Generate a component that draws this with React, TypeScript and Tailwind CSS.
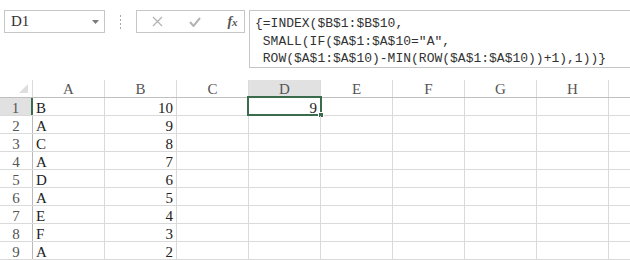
import React from "react";

const cols = ["A", "B", "C", "D", "E", "F", "G", "H"];

const rows: [string, number][] = [
  ["B", 10],
  ["A", 9],
  ["C", 8],
  ["A", 7],
  ["D", 6],
  ["A", 5],
  ["E", 4],
  ["F", 3],
  ["A", 2],
];

const mono = "font-[family-name:'Liberation_Mono','Noto_Sans_CJK_SC',monospace]";
const serif = "font-[family-name:'Liberation_Serif','Noto_Sans_CJK_SC',serif]";

function FormulaBar() {
  return (
    <div className="flex items-start h-[80px] pt-[10px] pl-[4px]">
      <div className="flex items-center justify-between w-[101px] h-[23px] border border-[#c6c6c6] pl-[6px] pr-[5px]">
        <span className={`${serif} text-[15px] text-[#333]`}>D1</span>
        <svg width="7" height="4" viewBox="0 0 7 4">
          <path d="M0 0h7L3.5 4z" fill="#7a7a7a" />
        </svg>
      </div>
      <div className="flex flex-col items-center justify-center gap-[2px] w-[31px] h-[23px]">
        {[0, 1, 2, 3].map((i) => (
          <span key={i} className="block w-[1px] h-[2px] bg-[#a9a9a9]" />
        ))}
      </div>
      <div className="flex items-center w-[109px] h-[23px] border border-[#c6c6c6]">
        <span className="w-[36px] flex justify-center pl-[4px]">
          <svg width="11" height="11" viewBox="0 0 11 11">
            <path d="M1 1l9 9M10 1l-9 9" stroke="#b4b4b4" strokeWidth="1.3" />
          </svg>
        </span>
        <span className="w-[36px] flex justify-center pl-[8px]">
          <svg width="12" height="10" viewBox="0 0 12 10">
            <path d="M1 5l3.5 4L11 1" stroke="#b4b4b4" strokeWidth="2" fill="none" />
          </svg>
        </span>
        <span className="flex-1 flex items-baseline justify-center pl-[12px] font-[family-name:'Liberation_Serif',serif] italic font-bold text-[14px] text-[#555]">
          f<span className="text-[11px]">x</span>
        </span>
      </div>
      <div
        className={`ml-[4px] flex-1 h-[58px] border-l border-t border-b border-[#c6c6c6] pl-[5px] pt-[4px] ${mono} text-[13px] leading-[17.6px] text-[#333] whitespace-pre`}
      >
        <div>{"{=INDEX($B$1:$B$10,"}</div>
        <div>{" SMALL(IF($A$1:$A$10=″A″,"}</div>
        <div>{" ROW($A$1:$A$10)-MIN(ROW($A$1:$A$10))+1),1))}"}</div>
      </div>
    </div>
  );
}

function Sheet() {
  return (
    <div className={`${serif} text-[15px]`}>
      <div className="flex h-[18px] border-b border-[#bfbfbf]">
        <div className="w-[33px] border-r border-[#dadada] flex items-end justify-end pr-[4px] pb-[4px]">
          <svg width="9" height="9" viewBox="0 0 9 9">
            <path d="M9 0v9H0z" fill="#dedede" />
          </svg>
        </div>
        {cols.map((c) => (
          <div
            key={c}
            className={`w-[72px] border-r border-[#dadada] flex justify-center pt-[2px] leading-[15px] text-[#555] ${
              c === "D" ? "bg-[#e1e1e1]" : ""
            }`}
          >
            {c}
          </div>
        ))}
        <div className="flex-1" />
      </div>
      {rows.map(([name, val], i) => (
        <div key={i} className="flex h-[18px] border-b border-[#dadada]">
          <div
            className={`w-[33px] flex justify-center pt-[3px] leading-[15px] text-[#555] ${
              i === 0
                ? "bg-[#e1e1e1] border-r-2 border-[#3a6b4c]"
                : "border-r border-[#b9b9b9]"
            }`}
          >
            {i + 1}
          </div>
          <div className="w-[72px] border-r border-[#dadada] pl-[3px] pt-[3px] leading-[15px] text-[#222]">
            {name}
          </div>
          <div className="w-[72px] border-r border-[#dadada] text-right pr-[3px] pt-[3px] leading-[15px] text-[#222]">
            {val}
          </div>
          <div className="w-[72px] border-r border-[#dadada]" />
          <div className="relative w-[72px] border-r border-[#dadada] text-right pr-[3px] pt-[3px] leading-[15px] text-[#222]">
            {i === 0 && (
              <>
                9
                <div className="absolute -left-[2px] -top-[2px] -right-[2px] -bottom-[1px] border-2 border-[#3a6b4c]" />
                <div className="absolute -right-[4px] -bottom-[3px] w-[6px] h-[6px] bg-[#3a6b4c] border border-white" />
              </>
            )}
          </div>
          {["E", "F", "G", "H"].map((c) => (
            <div key={c} className="w-[72px] border-r border-[#dadada]" />
          ))}
          <div className="flex-1" />
        </div>
      ))}
    </div>
  );
}

export default function App() {
  return (
    <div className="w-[630px] h-[260px] overflow-hidden bg-white">
      <FormulaBar />
      <Sheet />
    </div>
  );
}
